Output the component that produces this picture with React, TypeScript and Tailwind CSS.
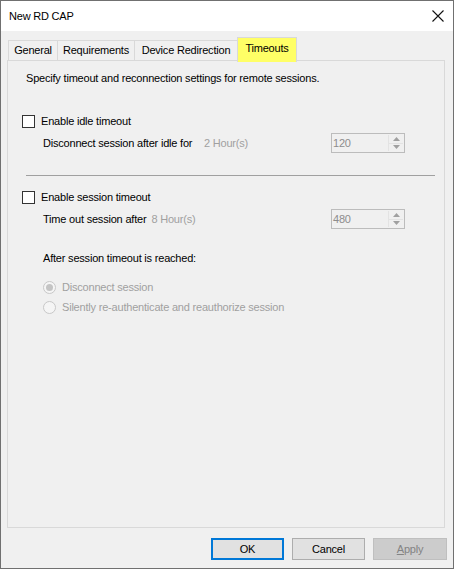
import React from 'react';

const font = { fontFamily: '"Liberation Sans", Arial, sans-serif' };

const Checkbox = () => (
  <span className="inline-block w-[13px] h-[13px] border border-[#333333] bg-white shrink-0" />
);

const Radio = ({ checked }: { checked?: boolean }) => (
  <span className="w-[13px] h-[13px] rounded-full border border-[#c8c8c8] bg-[#f5f5f5] shrink-0 flex items-center justify-center">
    {checked && <span className="w-[7px] h-[7px] rounded-full bg-[#c4c4c4]" />}
  </span>
);

const Spin = ({ value }: { value: string }) => (
  <div className="w-[74px] h-[20px] border border-[#bcbcbc] bg-[#f0f0f0] flex items-stretch">
    <span className="flex-1 pl-[1px] text-[#8d8d8d] leading-[18px]">{value}</span>
    <div className="w-[15px] my-[1px] mr-[1px] flex flex-col border-l border-[#e3e3e3]">
      <div className="flex-1 flex items-center justify-center border-b border-[#e3e3e3]">
        <svg width="7" height="4" viewBox="0 0 7 4"><path d="M0 4 L3.5 0 L7 4 Z" fill="#a0a0a0" /></svg>
      </div>
      <div className="flex-1 flex items-center justify-center">
        <svg width="7" height="4" viewBox="0 0 7 4"><path d="M0 0 L3.5 4 L7 0 Z" fill="#a0a0a0" /></svg>
      </div>
    </div>
  </div>
);

const tabs = [
  { label: 'General', w: 'w-[50px]' },
  { label: 'Requirements', w: 'w-[78px]' },
  { label: 'Device Redirection', w: 'w-[104px]' },
];

export default function App() {
  return (
    <div className="w-[454px] h-[569px] bg-[#f0f0f0] border border-[#707070] flex flex-col text-[11px] tracking-[-0.2px] leading-[15px] text-black" style={font}>
      {/* title bar */}
      <div className="h-[30px] bg-white flex items-center justify-between pl-[8px] pr-[9px] shrink-0">
        <span>New RD CAP</span>
        <svg width="12" height="12" viewBox="0 0 12 12">
          <path d="M0.5 0.5 L11.5 11.5 M11.5 0.5 L0.5 11.5" stroke="#111" strokeWidth="1.1" />
        </svg>
      </div>

      {/* tabs */}
      <div className="flex items-end pl-[7px] h-[29px] shrink-0 relative z-10">
        {tabs.map(t => (
          <div key={t.label} className={`${t.w} h-[20px] border border-b-0 border-[#d9d9d9] -mr-[1px] flex items-center justify-center bg-[#f0f0f0]`}>
            {t.label}
          </div>
        ))}
        <div className="w-[60px] h-[25px] pb-[3px] border border-b-0 border-[#d9d9d9] bg-[#ffff66] flex items-center justify-center -mb-[2px]">
          Timeouts
        </div>
      </div>

      {/* panel */}
      <div className="ml-[6px] w-[438px] h-[468px] border border-[#d9d9d9] shrink-0 flex flex-col pl-[14px] pt-[10px]">
        <p className="ml-[4px] h-[15px]">Specify timeout and reconnection settings for remote sessions.</p>

        <div className="mt-[28px] h-[15px] flex items-center gap-[6px]">
          <Checkbox />
          <span>Enable idle timeout</span>
        </div>
        <div className="mt-[4px] h-[20px] ml-[21px] w-[362px] flex items-center">
          <span className="w-[161px] whitespace-nowrap">Disconnect session after idle for</span>
          <span className="text-[#a0a0a0] flex-1">2 Hour(s)</span>
          <Spin value="120" />
        </div>

        <div className="mt-[22px] h-px bg-[#a0a0a0] ml-[4px] w-[409px]" />

        <div className="mt-[14px] h-[15px] flex items-center gap-[6px]">
          <Checkbox />
          <span>Enable session timeout</span>
        </div>
        <div className="mt-[4px] h-[20px] ml-[21px] w-[362px] flex items-center">
          <span className="mr-[5px] whitespace-nowrap">Time out session after</span>
          <span className="text-[#a0a0a0] flex-1">8 Hour(s)</span>
          <Spin value="480" />
        </div>

        <p className="mt-[22px] h-[15px] ml-[21px]">After session timeout is reached:</p>

        <div className="mt-[14px] h-[15px] flex items-center gap-[6px] ml-[21px] text-[#a0a0a0]">
          <Radio checked />
          <span>Disconnect session</span>
        </div>
        <div className="mt-[5px] h-[15px] flex items-center gap-[6px] ml-[21px] text-[#a0a0a0]">
          <Radio />
          <span>Silently re-authenticate and reauthorize session</span>
        </div>
      </div>

      {/* buttons */}
      <div className="flex justify-end gap-[8px] pr-[6px] mt-[10px]">
        <button className="w-[73px] h-[22px] border-2 border-[#0078d7] bg-[#e1e1e1] text-black">OK</button>
        <button className="w-[73px] h-[22px] border border-[#adadad] bg-[#e1e1e1] text-black">Cancel</button>
        <button className="w-[74px] h-[22px] border border-[#bfbfbf] bg-[#cccccc] text-[#838383]"><span className="underline">A</span>pply</button>
      </div>
    </div>
  );
}
